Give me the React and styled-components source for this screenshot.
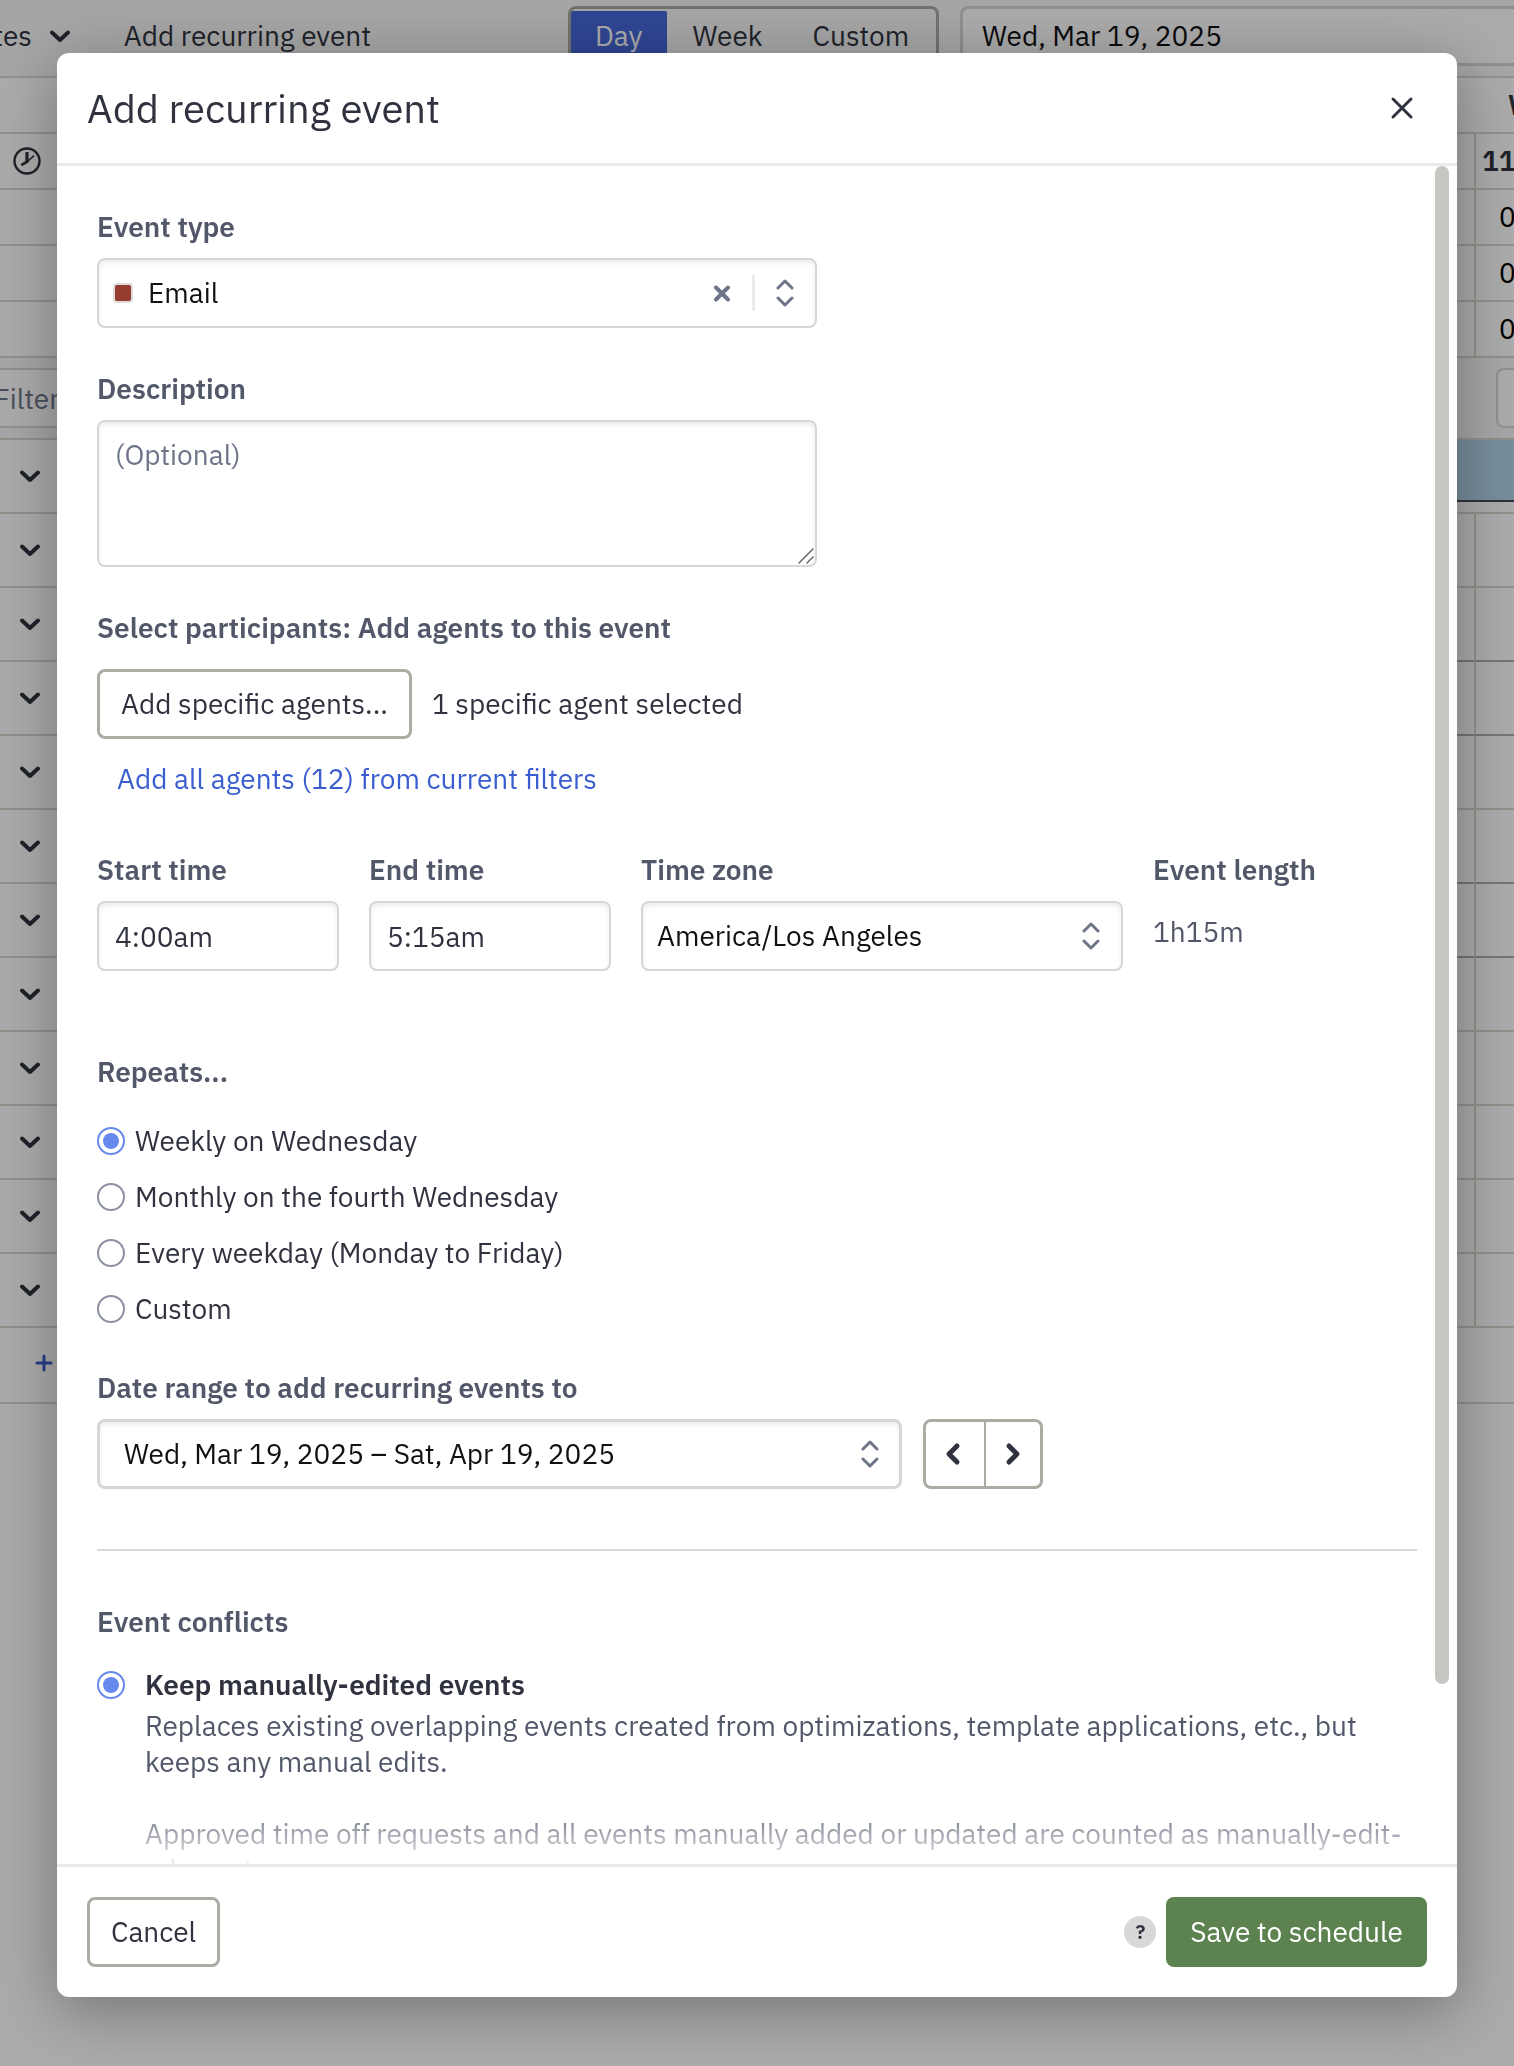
import { useState } from "react";
import styled, { createGlobalStyle, css } from "styled-components";

const theme = {
  FONT: `"IBM Plex Sans", Roboto, sans-serif`,
  WHITE: "#ffffff",
  INK: "#30333f",
  BLACK: "#101114",
  LABEL: "#525869",
  PLACEHOLDER: "#6e7589",
  BLUE: "#3a5ecf",
  RADIO_BLUE: "#6789ee",
  GREEN: "#5c824f",
  BORDER: "#d6d6d6",
  BUTTON_BORDER: "#abaca4",
  GRID_LINE: "#d8d8ce",
  DIVIDER: "#ebebeb",
};

const GlobalStyle = createGlobalStyle`
  *, *::before, *::after {
    box-sizing: border-box;
  }
  body {
    margin: 0;
    overflow: hidden;
    background: ${theme.WHITE};
    color: ${theme.INK};
    font-family: ${theme.FONT};
    font-size: 28px;
    line-height: 36px;
  }
  button, input, select, textarea {
    font: inherit;
    color: inherit;
    margin: 0;
  }
  button {
    cursor: pointer;
  }
  svg {
    flex: none;
  }
`;

/* schedule page behind the dialog */

const Schedule = styled.div`
  height: 100vh;
  overflow: hidden;
  white-space: nowrap;
`;

const Toolbar = styled.header`
  display: flex;
  align-items: flex-start;
  height: 78px;
  padding-top: 6px;
  background: #f8f8f8;
  border-bottom: 2px solid ${theme.GRID_LINE};
`;

const ToolbarButton = styled.button`
  display: flex;
  align-items: center;
  justify-content: flex-end;
  gap: 18px;
  height: 60px;
  width: ${({ width }) => width}px;
  padding: 0;
  border: 0;
  background: none;
`;

const Segments = styled.div`
  display: flex;
  gap: 2px;
  width: 371px;
  height: 60px;
  margin-left: 197px;
  padding: 2px 0;
  border: 3px solid ${theme.BUTTON_BORDER};
  border-radius: 8px;
`;

const Segment = styled.button`
  padding: 0 24px;
  border: 0;
  border-radius: 2px;
  background: ${({ active }) => (active ? "#4668db" : "none")};
  color: ${({ active }) => (active ? theme.WHITE : theme.INK)};
`;

const DateButton = styled.button`
  flex: 1;
  height: 60px;
  margin-left: 21px;
  padding: 0 19px;
  border: 3px solid ${theme.BORDER};
  border-right: 0;
  border-radius: 8px 0 0 8px;
  background: ${theme.WHITE};
  color: ${theme.BLACK};
  text-align: left;
`;

const Row = styled.div`
  display: grid;
  grid-template-columns: 60px 1fr 40px;
  height: ${({ height }) => height}px;
`;

const Cell = styled.div`
  display: flex;
  align-items: center;
  overflow: hidden;
  border-bottom: 2px solid
    ${({ dark }) => (dark ? "#aeafae" : theme.GRID_LINE)};
  ${({ line }) =>
    line &&
    css`
      border-left: 2px solid ${theme.GRID_LINE};
    `}
`;

const ClockCell = styled(Cell)`
  padding-left: 13px;
`;

const ToggleCell = styled(Cell)`
  justify-content: center;
`;

const AddCell = styled(Cell)`
  padding: 0 0 4px 35px;
`;

const HeadCell = styled(Cell)`
  padding-left: ${({ indent }) => indent}px;
  font-weight: ${({ bold }) => (bold ? 600 : 400)};
  color: ${({ bold }) => (bold ? theme.INK : "#000")};
`;

const BusyCell = styled(Cell)`
  align-items: flex-start;
`;

const Busy = styled.div`
  width: 100%;
  height: 62px;
  background: #b1d4ea;
  border-bottom: 2px solid #48485a;
`;

const FilterBar = styled.div`
  display: flex;
  align-items: center;
  justify-content: space-between;
  height: 82px;
  background: #f8f8f8;
  border-bottom: 2px solid ${theme.GRID_LINE};
`;

const FilterInput = styled.input`
  width: 400px;
  height: 60px;
  margin-left: -22px;
  padding: 0 14px;
  border: 2px solid ${theme.BORDER};
  border-radius: 8px;
  background: ${theme.WHITE};
  &::placeholder {
    color: ${theme.PLACEHOLDER};
    opacity: 1;
  }
`;

const FilterBox = styled.button`
  width: 18px;
  height: 60px;
  border: 2px solid ${theme.BORDER};
  border-right: 0;
  border-radius: 8px 0 0 8px;
  background: ${theme.WHITE};
`;

const IconButton = styled.button`
  display: flex;
  align-items: center;
  justify-content: center;
  padding: 0;
  border: 0;
  background: none;
  color: ${({ color }) => color || theme.INK};
`;

/* dialog */

const Overlay = styled.div`
  position: fixed;
  inset: 0;
  display: flex;
  justify-content: center;
  padding: 53px 57px 69px;
  background: rgba(0, 0, 0, 0.335);
`;

const Dialog = styled.form`
  display: flex;
  flex-direction: column;
  width: 100%;
  max-width: 1400px;
  border-radius: 12px;
  background: ${theme.WHITE};
  box-shadow: 0 12px 60px rgba(0, 0, 0, 0.33);
`;

const DialogHeader = styled.div`
  display: flex;
  align-items: center;
  justify-content: space-between;
  height: 113px;
  padding: 0 42px 0 30px;
  border-bottom: 3px solid ${theme.DIVIDER};
`;

const Title = styled.h1`
  margin: 0;
  font-size: 40px;
  line-height: 48px;
  font-weight: 400;
`;

const Content = styled.div`
  position: relative;
  flex: 1;
  min-height: 0;
`;

const Scroller = styled.div`
  height: 100%;
  padding: 43px 40px;
  overflow-y: auto;
  scrollbar-width: none;
`;

const ScrollThumb = styled.div`
  position: absolute;
  top: 0;
  right: 8px;
  width: 14px;
  height: 1518px;
  border-radius: 7px;
  background: #c6c7c2;
`;

const Fade = styled.div`
  position: absolute;
  left: 0;
  right: 24px;
  bottom: 0;
  height: 64px;
  background: linear-gradient(
    rgba(255, 255, 255, 0),
    rgba(255, 255, 255, 0.9)
  );
  pointer-events: none;
`;

const labelStyle = css`
  display: block;
  padding: 0;
  color: ${theme.LABEL};
  font-weight: 600;
  margin: 0 0 ${({ space }) => space || 13}px;
`;

const Label = styled.label`
  ${labelStyle}
`;

const Heading = styled.h2`
  ${labelStyle}
  font-size: 28px;
`;

const Field = styled.div`
  margin-bottom: 43px;
  max-width: 720px;
`;

const boxStyle = css`
  width: 100%;
  border: 2px solid ${theme.BORDER};
  border-radius: 8px;
  background: ${theme.WHITE};
  box-shadow: inset 0 3px 5px rgba(0, 0, 0, 0.07);
`;

const SelectBox = styled.div`
  ${boxStyle}
  display: flex;
  align-items: center;
  height: 70px;
  padding: 0 21px 0 14px;
`;

const Select = styled.select`
  flex: 1;
  min-width: 0;
  height: 100%;
  padding: 0;
  border: 0;
  outline: 0;
  appearance: none;
  background: none;
  color: ${theme.BLACK};
`;

const Swatch = styled.span`
  width: 20px;
  height: 20px;
  margin-right: 15px;
  border: 2px solid #dcdcd8;
  border-radius: 4px;
  background: #963c2f;
`;

const Separator = styled.span`
  width: 3px;
  height: 36px;
  margin: 0 21px 0 22px;
  background: ${theme.DIVIDER};
`;

const TextAreaBox = styled.div`
  position: relative;
  svg {
    position: absolute;
    right: 3px;
    bottom: 3px;
    color: #5c5c5c;
    pointer-events: none;
  }
`;

const TextArea = styled.textarea`
  ${boxStyle}
  display: block;
  height: 147px;
  padding: 15px 16px;
  resize: vertical;
  &::-webkit-resizer {
    background: transparent;
  }
  &::placeholder {
    color: ${theme.PLACEHOLDER};
    opacity: 1;
  }
`;

const TextInput = styled.input`
  ${boxStyle}
  height: 70px;
  padding: 0 16px;
`;

const Inline = styled.div`
  display: flex;
  align-items: center;
  gap: ${({ gap }) => gap}px;
`;

const OutlineButton = styled.button`
  height: 70px;
  padding: 0 21px;
  border: 3px solid ${theme.BUTTON_BORDER};
  border-radius: 8px;
  background: ${theme.WHITE};
`;

const AddAll = styled.a`
  display: inline-block;
  margin: 22px 20px 0;
  color: ${theme.BLUE};
  text-decoration: none;
`;

const Times = styled.div`
  display: grid;
  grid-template-columns: minmax(0, 242px) minmax(0, 242px) minmax(0, 482px) auto;
  gap: 30px;
  margin: 55px 0 83px;
`;

const EventLength = styled.output`
  display: block;
  margin-top: 26px;
  color: ${theme.LABEL};
`;

const RadioGroup = styled.fieldset`
  margin: 0 0 33px;
  padding: 0;
  border: 0;
  legend {
    ${labelStyle}
    margin-bottom: 23px;
  }
`;

const RadioRow = styled.label`
  display: flex;
  align-items: center;
  gap: 10px;
  height: 56px;
`;

const Radio = styled.input`
  display: grid;
  place-content: center;
  flex: none;
  width: 28px;
  height: 28px;
  border: 2px solid #8b90a3;
  border-radius: 50%;
  appearance: none;
  background: ${theme.WHITE};
  &:checked {
    border-color: ${theme.RADIO_BLUE};
  }
  &:checked::before {
    content: "";
    width: 16px;
    height: 16px;
    border-radius: 50%;
    background: ${theme.RADIO_BLUE};
  }
`;

const DateRange = styled.button`
  ${boxStyle}
  display: flex;
  align-items: center;
  justify-content: space-between;
  flex: 0 1 805px;
  height: 70px;
  padding: 0 20px 0 24px;
  border-width: 3px;
  color: ${theme.BLACK};
`;

const Pager = styled.div`
  display: flex;
  width: 120px;
  height: 70px;
  border: 3px solid ${theme.BUTTON_BORDER};
  border-radius: 8px;
  button {
    flex: 1;
    padding-right: 3px;
  }
  button + button {
    padding: 0;
    border-left: 2px solid ${theme.BUTTON_BORDER};
  }
`;

const Rule = styled.hr`
  height: 2px;
  margin: 60px 0 53px;
  border: 0;
  background: #d9d9d5;
`;

const Conflict = styled.div`
  display: grid;
  grid-template-columns: 28px 1fr;
  column-gap: 20px;
  align-items: center;
  label {
    font-weight: 600;
  }
`;

const ConflictText = styled.div`
  grid-column: 2;
  margin-top: 5px;
  color: ${theme.LABEL};
  p {
    margin: 0 0 36px;
  }
`;

const DialogFooter = styled.div`
  display: flex;
  align-items: center;
  gap: 10px;
  height: 133px;
  padding: 0 30px;
  border-top: 3px solid ${theme.DIVIDER};
`;

const Help = styled.button`
  width: 32px;
  height: 32px;
  margin-left: auto;
  padding: 0;
  border: 0;
  border-radius: 50%;
  background: #d8d8d6;
  font-size: 20px;
  line-height: 32px;
  font-weight: 600;
`;

const SaveButton = styled.button`
  height: 70px;
  padding: 0 24px;
  border: 0;
  border-radius: 8px;
  background: ${theme.GREEN};
  color: ${theme.WHITE};
`;

const UpDownIcon = styled.span`
  display: flex;
  color: ${theme.PLACEHOLDER};
`;

const Icon = ({ width, height, stroke, d }) => (
  <svg
    width={width}
    height={height}
    viewBox={`0 0 ${width} ${height}`}
    fill="none"
    stroke="currentColor"
    strokeWidth={stroke}
    strokeLinecap="round"
    strokeLinejoin="round"
    aria-hidden="true"
  >
    <path d={d} />
  </svg>
);

const Chevron = () => (
  <Icon width={20} height={12} stroke={4} d="M2 2.5 L10 10 L18 2.5" />
);

const UpDown = () => (
  <UpDownIcon>
    <Icon
      width={18}
      height={28}
      stroke={3}
      d="M2 9 L9 2 L16 9 M2 19 L9 26 L16 19"
    />
  </UpDownIcon>
);

const Clock = () => (
  <svg width="28" height="28" viewBox="0 0 28 28" fill="none" aria-hidden="true">
    <circle cx="14" cy="14" r="12.5" stroke="currentColor" strokeWidth="2.4" />
    <path
      d="M12.4 5 L15.6 5 L15.6 15.4 L9 19.2 L7.6 17 L12.4 14 Z"
      fill="currentColor"
    />
    <path d="M14 15 L21 8.6" stroke="currentColor" strokeWidth="1.6" />
  </svg>
);

const repeatOptions = [
  "Weekly on Wednesday",
  "Monthly on the fourth Wednesday",
  "Every weekday (Monday to Friday)",
  "Custom",
];

const headRows = [
  { text: "Wed", indent: 34, bold: true },
  { text: "11", indent: 6, bold: true, line: true, clock: true },
  { text: "0", indent: 23, line: true },
  { text: "0", indent: 23, line: true },
  { text: "0", indent: 23, line: true },
];

const agentRows = Array.from({ length: 12 }, (_, index) => ({
  busy: index === 0,
  dark: [2, 3, 5, 6].includes(index),
}));

const SchedulePage = () => (
  <Schedule aria-hidden="true">
    <Toolbar>
      <ToolbarButton width={70}>
        <span>Templates</span>
        <Chevron />
      </ToolbarButton>
      <ToolbarButton width={301}>Add recurring event</ToolbarButton>
      <Segments>
        <Segment active>Day</Segment>
        <Segment>Week</Segment>
        <Segment>Custom</Segment>
      </Segments>
      <DateButton>Wed, Mar 19, 2025</DateButton>
    </Toolbar>
    {headRows.map(({ text, indent, bold, line, clock }, index) => (
      <Row key={index} height={56}>
        <ClockCell>{clock && <Clock />}</ClockCell>
        <Cell />
        <HeadCell indent={indent} bold={bold} line={line}>
          {text}
        </HeadCell>
      </Row>
    ))}
    <FilterBar>
      <FilterInput placeholder="Filter" aria-label="Filter agents" />
      <FilterBox aria-label="Options" />
    </FilterBar>
    {agentRows.map(({ busy, dark }, index) => (
      <Row key={index} height={74}>
        <ToggleCell>
          <IconButton aria-label="Expand agent">
            <Chevron />
          </IconButton>
        </ToggleCell>
        <BusyCell dark={dark}>{busy && <Busy />}</BusyCell>
        <BusyCell dark={dark} line={!busy}>
          {busy && <Busy />}
        </BusyCell>
      </Row>
    ))}
    <Row height={76}>
      <AddCell>
        <IconButton color={theme.BLUE} aria-label="Add agent">
          <Icon width={18} height={18} stroke={3} d="M9 2 V16 M2 9 H16" />
        </IconButton>
      </AddCell>
      <Cell />
      <Cell />
    </Row>
  </Schedule>
);

const App = () => {
  const [repeat, setRepeat] = useState(repeatOptions[0]);
  const [start, setStart] = useState("4:00am");
  const [end, setEnd] = useState("5:15am");

  return (
    <>
      <GlobalStyle />
      <SchedulePage />
      <Overlay>
        <Dialog
          role="dialog"
          aria-modal="true"
          aria-labelledby="dialog-title"
          onSubmit={(e) => e.preventDefault()}
        >
          <DialogHeader>
            <Title id="dialog-title">Add recurring event</Title>
            <IconButton type="button" aria-label="Close">
              <Icon
                width={26}
                height={24}
                stroke={3}
                d="M4 3 L22 21 M22 3 L4 21"
              />
            </IconButton>
          </DialogHeader>
          <Content>
            <Scroller>
              <Field>
                <Label htmlFor="event-type">Event type</Label>
                <SelectBox>
                  <Swatch />
                  <Select id="event-type">
                    <option>Email</option>
                  </Select>
                  <IconButton
                    type="button"
                    color={theme.PLACEHOLDER}
                    aria-label="Clear event type"
                  >
                    <Icon
                      width={16}
                      height={17}
                      stroke={4}
                      d="M2 2.5 L14 14.5 M14 2.5 L2 14.5"
                    />
                  </IconButton>
                  <Separator />
                  <UpDown />
                </SelectBox>
              </Field>
              <Field>
                <Label htmlFor="description">Description</Label>
                <TextAreaBox>
                  <TextArea id="description" placeholder="(Optional)" />
                  <Icon
                    width={16}
                    height={16}
                    stroke={1.4}
                    d="M1 15 L15 1 M9 15 L15 9"
                  />
                </TextAreaBox>
              </Field>
              <Heading space={23}>
                Select participants: Add agents to this event
              </Heading>
              <Inline gap={20}>
                <OutlineButton type="button">
                  Add specific agents...
                </OutlineButton>
                <span>1 specific agent selected</span>
              </Inline>
              <AddAll href="#all-agents">
                Add all agents (12) from current filters
              </AddAll>
              <Times>
                <div>
                  <Label htmlFor="start">Start time</Label>
                  <TextInput
                    id="start"
                    value={start}
                    onChange={(e) => setStart(e.target.value)}
                  />
                </div>
                <div>
                  <Label htmlFor="end">End time</Label>
                  <TextInput
                    id="end"
                    value={end}
                    onChange={(e) => setEnd(e.target.value)}
                  />
                </div>
                <div>
                  <Label htmlFor="zone">Time zone</Label>
                  <SelectBox>
                    <Select id="zone">
                      <option>America/Los Angeles</option>
                    </Select>
                    <UpDown />
                  </SelectBox>
                </div>
                <div>
                  <Label htmlFor="length">Event length</Label>
                  <EventLength id="length">1h15m</EventLength>
                </div>
              </Times>
              <RadioGroup>
                <legend>Repeats...</legend>
                {repeatOptions.map((option) => (
                  <RadioRow key={option}>
                    <Radio
                      type="radio"
                      name="repeat"
                      checked={repeat === option}
                      onChange={() => setRepeat(option)}
                    />
                    {option}
                  </RadioRow>
                ))}
              </RadioGroup>
              <Label htmlFor="range">Date range to add recurring events to</Label>
              <Inline gap={21}>
                <DateRange id="range" type="button" aria-haspopup="dialog">
                  Wed, Mar 19, 2025 – Sat, Apr 19, 2025
                  <UpDown />
                </DateRange>
                <Pager>
                  <IconButton type="button" aria-label="Previous range">
                    <Icon
                      width={16}
                      height={24}
                      stroke={5}
                      d="M12 4 L4 12 L12 20"
                    />
                  </IconButton>
                  <IconButton type="button" aria-label="Next range">
                    <Icon
                      width={16}
                      height={24}
                      stroke={5}
                      d="M4 4 L12 12 L4 20"
                    />
                  </IconButton>
                </Pager>
              </Inline>
              <Rule />
              <Heading space={27}>Event conflicts</Heading>
              <Conflict>
                <Radio
                  type="radio"
                  name="conflict"
                  id="keep-manual"
                  defaultChecked
                />
                <label htmlFor="keep-manual">Keep manually-edited events</label>
                <ConflictText>
                  <p>
                    Replaces existing overlapping events created from
                    optimizations, template applications, etc., but keeps any
                    manual edits.
                  </p>
                  <p>
                    Approved time off requests and all events manually added or
                    updated are counted as manually-edit&shy;ed events.
                  </p>
                </ConflictText>
              </Conflict>
            </Scroller>
            <Fade />
            <ScrollThumb aria-hidden="true" />
          </Content>
          <DialogFooter>
            <OutlineButton type="button">Cancel</OutlineButton>
            <Help type="button" aria-label="Help">
              ?
            </Help>
            <SaveButton type="submit">Save to schedule</SaveButton>
          </DialogFooter>
        </Dialog>
      </Overlay>
    </>
  );
};

export default App;
